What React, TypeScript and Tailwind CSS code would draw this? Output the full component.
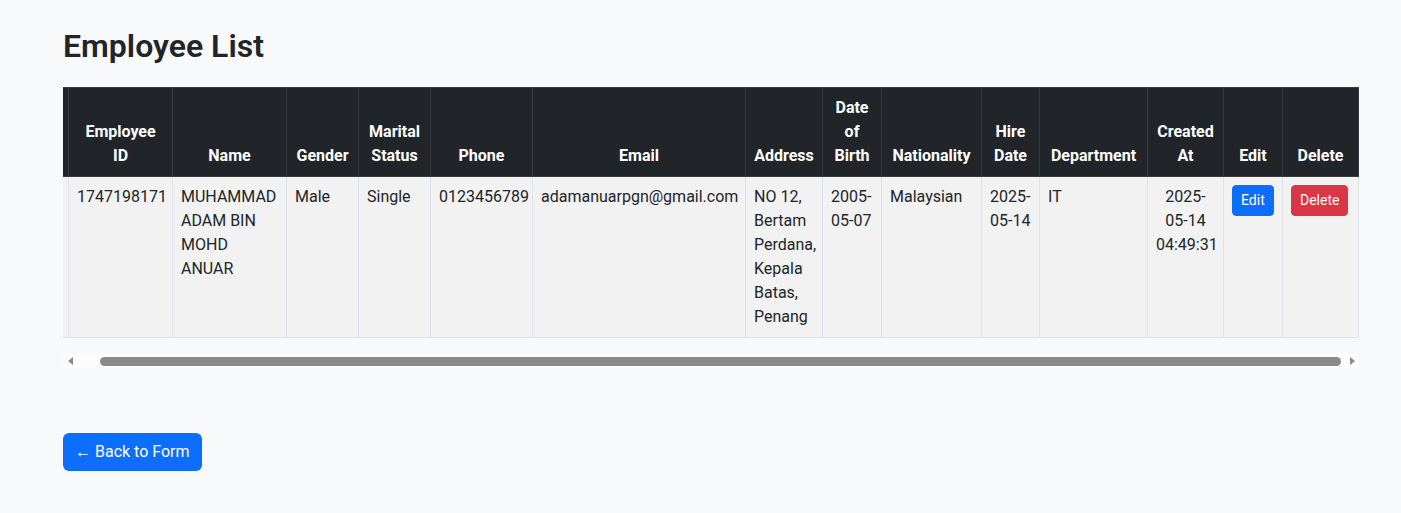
import { useEffect, useRef } from "react";

const cols = [34, 104, 114, 72, 72, 102, 213, 77, 59, 100, 58, 108, 76, 59, 76];

const headers = [
  "",
  "Employee ID",
  "Name",
  "Gender",
  "Marital Status",
  "Phone",
  "Email",
  "Address",
  "Date of Birth",
  "Nationality",
  "Hire Date",
  "Department",
  "Created At",
  "Edit",
  "Delete",
];

const employees = [
  {
    id: "1747198171",
    name: "MUHAMMAD ADAM BIN MOHD ANUAR",
    gender: "Male",
    marital: "Single",
    phone: "0123456789",
    email: "adamanuarpgn@gmail.com",
    address: "NO 12, Bertam Perdana, Kepala Batas, Penang",
    dob: "2005-05-07",
    nationality: "Malaysian",
    hired: "2025-05-14",
    dept: "IT",
    created: "2025-05-14 04:49:31",
  },
];

function ScrollBar() {
  return (
    <div className="flex h-[14px] items-center bg-[#fcfcfc]">
      <div className="flex w-[14px] justify-center">
        <svg width="5" height="8" viewBox="0 0 5 8">
          <path d="M5 0 L0 4 L5 8 Z" fill="#8a8a8a" />
        </svg>
      </div>
      <div className="ml-[23px] mr-[4px] h-[9px] flex-1 rounded-full bg-[#8a8a8a]" />
      <div className="flex w-[14px] justify-center">
        <svg width="5" height="8" viewBox="0 0 5 8">
          <path d="M0 0 L5 4 L0 8 Z" fill="#8a8a8a" />
        </svg>
      </div>
    </div>
  );
}

export default function App() {
  const scroller = useRef<HTMLDivElement>(null);

  // the screenshot shows the table scrolled to its right end
  useEffect(() => {
    if (scroller.current) scroller.current.scrollLeft = scroller.current.scrollWidth;
  }, []);

  const td = "border border-[#dee2e6] px-2 py-2 align-top";

  return (
    <div
      className="min-h-screen bg-[#f8f9fa] pl-[63px] pr-[42px] pt-[27px] text-[16px] leading-6 text-[#212529]"
      style={{ fontFamily: "Roboto, 'Noto Sans', sans-serif" }}
    >
      <h2 className="mb-[22px] text-[32px] font-semibold leading-[1.2]">Employee List</h2>

      <div ref={scroller} className="overflow-x-auto [scrollbar-width:none]">
        <table className="mb-4 w-[1324px] table-fixed border-collapse">
          <colgroup>
            {cols.map((w, i) => (
              <col key={i} style={{ width: w }} />
            ))}
          </colgroup>
          <thead>
            <tr className="bg-[#212529] text-white">
              {headers.map((h, i) => (
                <th
                  key={i}
                  className="border border-[#373b3e] px-2 py-2 text-center align-bottom font-bold"
                >
                  {h}
                </th>
              ))}
            </tr>
          </thead>
          <tbody>
            {employees.map((e) => (
              <tr key={e.id} className="bg-[#f2f2f2]">
                <td className={td}></td>
                <td className={td}>{e.id}</td>
                <td className={td}>{e.name}</td>
                <td className={td}>{e.gender}</td>
                <td className={td}>{e.marital}</td>
                <td className={td}>{e.phone}</td>
                <td className={td}>{e.email}</td>
                <td className={td}>{e.address}</td>
                <td className={td}>{e.dob}</td>
                <td className={td}>{e.nationality}</td>
                <td className={td}>{e.hired}</td>
                <td className={td}>{e.dept}</td>
                <td className={`${td} text-center`}>{e.created}</td>
                <td className={td}>
                  <button className="rounded border border-[#0d6efd] bg-[#0d6efd] px-2 py-1 text-[14px] leading-[1.5] text-white">
                    Edit
                  </button>
                </td>
                <td className={td}>
                  <button className="rounded border border-[#dc3545] bg-[#dc3545] px-2 py-1 text-[14px] leading-[1.5] text-white">
                    Delete
                  </button>
                </td>
              </tr>
            ))}
          </tbody>
        </table>
      </div>
      <ScrollBar />

      <button className="mt-[65px] rounded-md bg-[#0d6efd] px-3 py-[7px] text-[16px] leading-6 text-white">
        ← Back to Form
      </button>
    </div>
  );
}
